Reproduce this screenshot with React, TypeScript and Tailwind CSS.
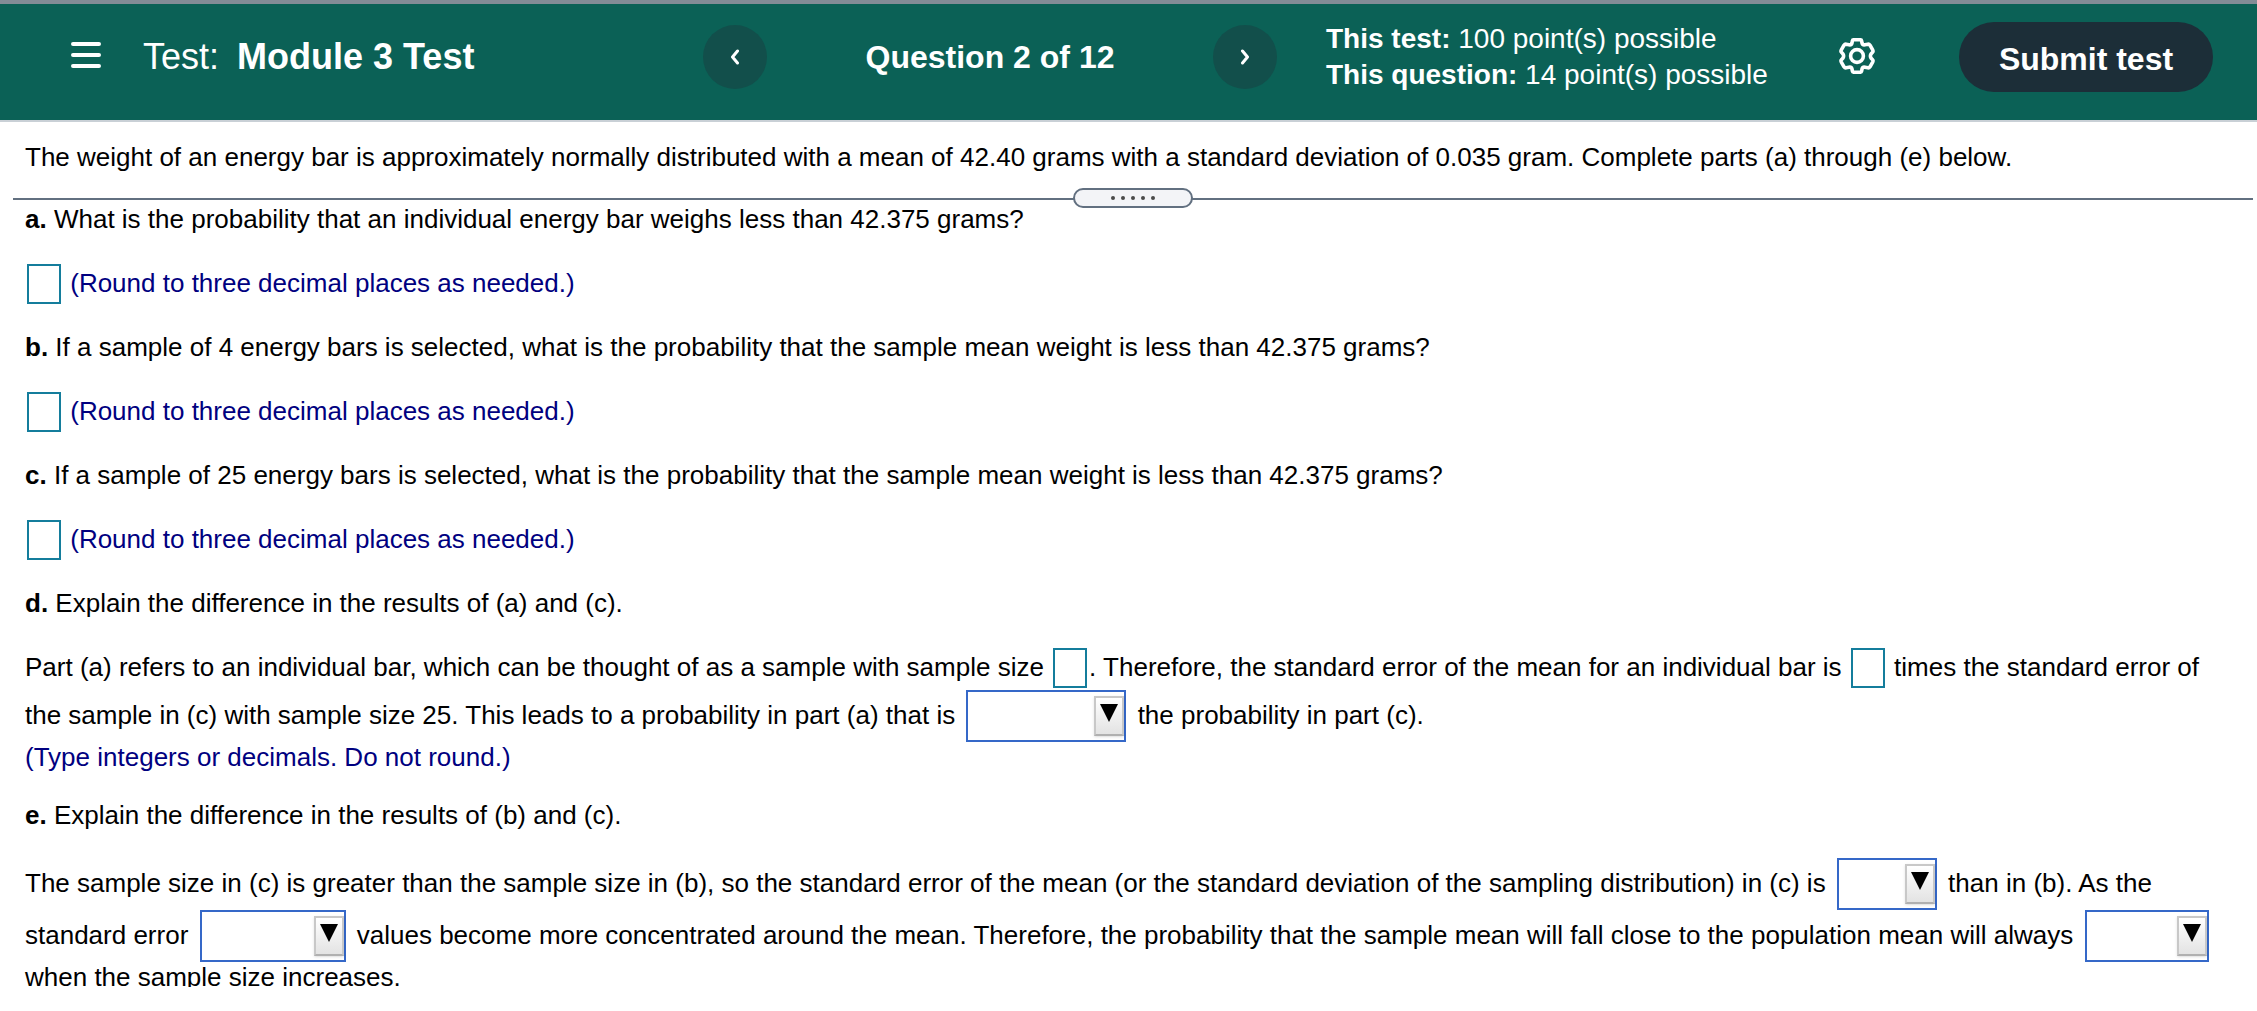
import React, { useState } from 'react';

type AnswerBoxProps = {
  label: string;
};

const AnswerBox = ({ label }: AnswerBoxProps) => {
  const [value, setValue] = useState('');

  return (
    <input
      type="text"
      aria-label={label}
      value={value}
      onChange={(e) => setValue(e.target.value)}
      className="mx-[2px] mb-[2px] inline-block h-10 w-[34px] border-2 border-[#147d9c] bg-white pb-[2px] outline-none"
    />
  );
};

type AnswerSelectProps = {
  label: string;
  width: string;
  options: string[];
};

const AnswerSelect = ({ label, width, options }: AnswerSelectProps) => (
  <span className={`relative mx-1 inline-block h-[52px] overflow-hidden align-[-18px] ${width}`}>
    <select
      aria-label={label}
      defaultValue=""
      className="block h-full w-full appearance-none border-2 border-[#3568c8] bg-white pl-2 pr-9 outline-none"
    >
      <option value=""></option>
      {options.map((option) => (
        <option key={option} value={option}>
          {option}
        </option>
      ))}
    </select>
    {/* Arrow button drawn over the native control */}
    <span className="pointer-events-none absolute right-[2px] top-[6px] flex h-10 w-[30px] justify-center border-2 border-[#c8c8c8] border-b-[#b0b0b0] bg-gradient-to-b from-white to-[#e3e3e3] pt-[6px] shadow-sm">
      <svg className="h-[18px] w-[18px]" viewBox="0 0 18 18" aria-hidden="true">
        <path d="M0 0H18L9 18Z" fill="#000" />
      </svg>
    </span>
  </span>
);

const roundedParts = [
  {
    id: 'a',
    question: 'What is the probability that an individual energy bar weighs less than 42.375 grams?',
  },
  {
    id: 'b',
    question:
      'If a sample of 4 energy bars is selected, what is the probability that the sample mean weight is less than 42.375 grams?',
  },
  {
    id: 'c',
    question:
      'If a sample of 25 energy bars is selected, what is the probability that the sample mean weight is less than 42.375 grams?',
  },
];

const Header = () => (
  <header className="flex shrink-0 items-center border-b-2 border-t-4 border-b-[#c9d0d6] border-t-[#838c96] bg-[#0b6156] pb-[27px] pl-[71px] pr-11 pt-[17px] text-white">
    <div className="flex flex-1 items-center gap-[42px]">
      <button type="button" aria-label="Menu" className="mb-1">
        <svg className="block h-[26px] w-[30px]" viewBox="0 0 30 26" stroke="#fff" strokeWidth="4" strokeLinecap="round">
          <path d="M2 2H28M2 13H28M2 24H28" />
        </svg>
      </button>
      <h1 className="flex gap-[18px] whitespace-nowrap text-[36px] leading-[42px]">
        <span>Test:</span>
        <span className="font-bold">Module 3 Test</span>
      </h1>
    </div>

    <nav className="flex w-[574px] items-center justify-between">
      <button
        type="button"
        aria-label="Previous question"
        className="flex h-16 w-16 items-center justify-center rounded-full bg-[#124f4b]"
      >
        <svg className="h-4 w-[10px]" viewBox="0 0 10 16" fill="none" stroke="#fff" strokeWidth="3" strokeLinecap="round" strokeLinejoin="round">
          <path d="M7.5 2L2.5 8L7.5 14" />
        </svg>
      </button>
      <span className="whitespace-nowrap text-[32px] font-bold leading-10">Question 2 of 12</span>
      <button
        type="button"
        aria-label="Next question"
        className="flex h-16 w-16 items-center justify-center rounded-full bg-[#124f4b]"
      >
        <svg className="h-4 w-[10px]" viewBox="0 0 10 16" fill="none" stroke="#fff" strokeWidth="3" strokeLinecap="round" strokeLinejoin="round">
          <path d="M2.5 2L7.5 8L2.5 14" />
        </svg>
      </button>
    </nav>

    <div className="ml-[49px] w-[513px] whitespace-nowrap text-[28px] leading-9">
      <p>
        <b>This test:</b> 100 point(s) possible
      </p>
      <p>
        <b>This question:</b> 14 point(s) possible
      </p>
    </div>

    <button type="button" aria-label="Settings" className="mb-[2px]">
      <svg className="block h-9 w-9" viewBox="0 0 36 36" fill="none" stroke="#fff" strokeWidth="3.6" strokeLinejoin="round">
        <path d="M14.4 1.8H21.6Q22.4 1.8 22.6 2.8L23 5Q23.6 7.2 26 6.8L28.8 6.2Q30.2 6 31 7.2L33.8 12.2Q34.4 13.4 33.4 14.4L32 16Q30.8 18 32 20L33.4 21.6Q34.4 22.6 33.8 23.8L31 28.8Q30.2 30 28.8 29.8L26 29.2Q23.6 28.8 23 31L22.6 33.2Q22.4 34.2 21.6 34.2H14.4Q13.6 34.2 13.4 33.2L13 31Q12.4 28.8 10 29.2L7.2 29.8Q5.8 30 5 28.8L2.2 23.8Q1.6 22.6 2.6 21.6L4 20Q5.2 18 4 16L2.6 14.4Q1.6 13.4 2.2 12.2L5 7.2Q5.8 6 7.2 6.2L10 6.8Q12.4 7.2 13 5L13.4 2.8Q13.6 1.8 14.4 1.8Z" />
        <circle cx="18" cy="18" r="6.4" />
      </svg>
    </button>

    <button
      type="button"
      className="ml-[84px] h-[70px] w-[254px] whitespace-nowrap rounded-full bg-[#1c2e38] pt-1 text-[32px] font-bold leading-10"
    >
      Submit test
    </button>
  </header>
);

const App = () => {
  return (
    <div className="flex h-screen flex-col bg-white pb-6 font-['Liberation_Sans',Arial,sans-serif] text-[26px] leading-[30px] text-black">
      <Header />

      <p className="shrink-0 px-[25px] pb-[26px] pt-5">
        The weight of an energy bar is approximately normally distributed with a mean of 42.40 grams with a standard
        deviation of 0.035 gram. Complete parts (a) through (e) below.
      </p>

      <div className="relative ml-[13px] mr-1 h-[2px] shrink-0 bg-[#627080]">
        <button
          type="button"
          aria-label="Resize panes"
          className="absolute left-1/2 top-0 flex h-5 w-[120px] -translate-x-1/2 -translate-y-1/2 items-center justify-center gap-[6px] rounded-full border-2 border-[#627080] bg-[#f3f4f7]"
        >
          {[0, 1, 2, 3, 4].map((dot) => (
            <span key={dot} className="h-1 w-1 rounded-full bg-[#4a4a4a]" />
          ))}
        </button>
      </div>

      <main className="min-h-0 flex-1 overflow-hidden px-[25px] pt-1">
        {roundedParts.map((part) => (
          <section key={part.id}>
            <p className="mb-[30px]">
              <b>{part.id}.</b> {part.question}
            </p>
            <p className="mb-[26px] text-[#000080]">
              <AnswerBox label={`Answer for part ${part.id}`} /> (Round to three decimal places as needed.)
            </p>
          </section>
        ))}

        <section className="mb-7">
          <p className="mb-[30px]">
            <b>d.</b> Explain the difference in the results of (a) and (c).
          </p>
          <p>
            Part (a) refers to an individual bar, which can be thought of as a sample with sample size{' '}
            <AnswerBox label="Sample size" />. Therefore, the standard error of the mean for an individual bar is{' '}
            <AnswerBox label="Times the standard error" /> times the standard error of the sample in (c) with sample
            size 25. This leads to a probability in part (a) that is{' '}
            <AnswerSelect
              label="Comparison of probabilities"
              width="w-[160px]"
              options={['less than', 'equal to', 'greater than']}
            />{' '}
            the probability in part (c).
          </p>
          <p className="text-[#000080]">(Type integers or decimals. Do not round.)</p>
        </section>

        <section>
          <p className="mb-7">
            <b>e.</b> Explain the difference in the results of (b) and (c).
          </p>
          <p>
            The sample size in (c) is greater than the sample size in (b), so the standard error of the mean (or the
            standard deviation of the sampling distribution) in (c) is{' '}
            <AnswerSelect label="Size of the standard error" width="w-[100px]" options={['less', 'greater']} /> than in
            (b). As the standard error{' '}
            <AnswerSelect label="Change in the standard error" width="w-[146px]" options={['increases', 'decreases']} />{' '}
            values become more concentrated around the mean. Therefore, the probability that the sample mean will fall
            close to the population mean will always{' '}
            <AnswerSelect label="Change in the probability" width="w-[124px]" options={['increase', 'decrease']} /> when
            the sample size increases.
          </p>
        </section>
      </main>
    </div>
  );
};

export default App;
